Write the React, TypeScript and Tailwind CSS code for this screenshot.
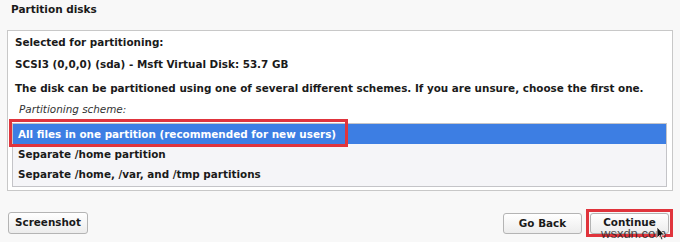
import React from 'react';

const schemes = [
  'All files in one partition (recommended for new users)',
  'Separate /home partition',
  'Separate /home, /var, and /tmp partitions',
];

export default function App() {
  const selected = 0;

  return (
    <div
      className="w-[680px] h-[242px] bg-[#f8f8f8] text-[#1a1a1a] relative overflow-hidden"
      style={{ fontFamily: '"DejaVu Sans", Verdana, sans-serif' }}
    >
      {/* Title */}
      <div className="pl-[11px] pt-[2px] h-[30px] text-[10.5px] font-bold">Partition disks</div>

      {/* Main panel */}
      <div className="ml-[7px] w-[666px] h-[161px] border border-[#c8c8c8] bg-white pl-[4px] pr-[5px]">
        <div className="pl-[3px] text-[10.4px] font-bold leading-[22px]">Selected for partitioning:</div>
        <div className="pl-[3px] text-[10.4px] font-bold leading-[22px]">SCSI3 (0,0,0) (sda) - Msft Virtual Disk: 53.7 GB</div>
        <div className="pl-[3px] pt-[2px] text-[10.4px] font-bold leading-[22px] whitespace-nowrap">
          The disk can be partitioned using one of several different schemes. If you are unsure, choose the first one.
        </div>
        <div className="pl-[7px] text-[10.4px] italic leading-[20px] text-[#333]">Partitioning scheme:</div>

        {/* Listbox */}
        <div className="mt-[4px] h-[64px] border border-[#c4c4c8] bg-[#f5f5f8] relative">
          {schemes.map((s, i) => (
            <div
              key={i}
              className={`h-[20px] leading-[20px] pl-[5px] text-[10.4px] font-bold ${
                i === selected ? 'bg-[#3d7ee3] text-white' : 'text-[#1a1a1a]'
              }`}
            >
              {s}
            </div>
          ))}
          {/* highlight box */}
          <div className="absolute left-[-4px] top-[-5px] w-[339px] h-[28px] border-[3px] border-[#e0343c]" />
        </div>
      </div>

      {/* Buttons */}
      <div className="flex items-center justify-between pl-[8px] pr-[7px] mt-[18px] h-[28px]">
        <button className="w-[80px] h-[22px] border border-[#b4b4b4] rounded-[3px] bg-gradient-to-b from-white to-[#ececec] text-[10.4px] font-bold">
          Screenshot
        </button>
        <div className="flex items-center gap-[4px]">
          <button className="w-[79px] h-[21px] mt-[1px] border border-[#b4b4b4] rounded-[3px] bg-gradient-to-b from-white to-[#ececec] text-[10.4px] font-bold">
            Go Back
          </button>
          <div className="w-[87px] h-[28px] border-[3px] border-[#e0343c] flex items-center justify-center">
            <button className="w-[79px] h-[21px] border border-[#b4b4b4] rounded-[3px] bg-gradient-to-b from-white to-[#ececec] text-[10.4px] font-bold">
              Continue
            </button>
          </div>
        </div>
      </div>

      {/* Watermark + cursor */}
      <div
        className="absolute left-[601px] top-[224px] text-[13px] text-[#222] opacity-80"
        style={{ fontFamily: '"Liberation Sans", Arial, sans-serif' }}
      >
        wsxdn.com
      </div>
      <svg className="absolute left-[656px] top-[226px]" width="10" height="15" viewBox="0 0 10 15">
        <path d="M1 1 L1 12 L3.5 9.5 L5.5 14 L7 13.3 L5 9 L8.5 9 Z" fill="#111" stroke="#fff" strokeWidth="0.8" />
      </svg>
    </div>
  );
}
